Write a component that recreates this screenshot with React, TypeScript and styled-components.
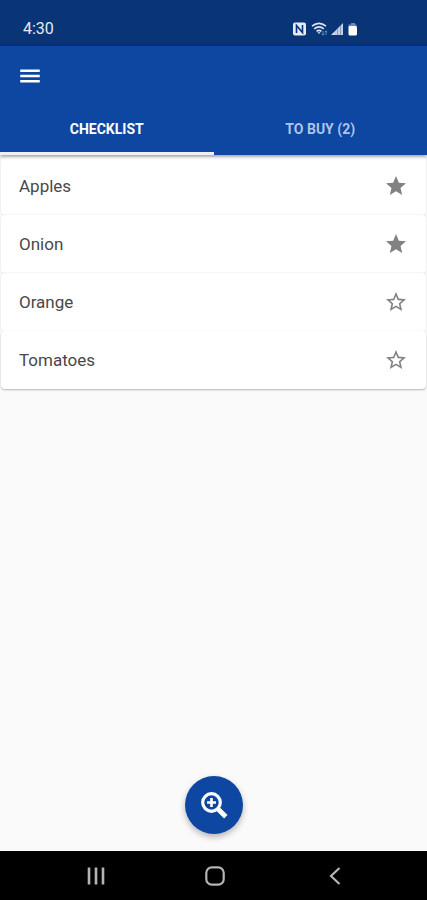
import React, { useState } from "react";
import styled, { createGlobalStyle } from "styled-components";

const GlobalStyle = createGlobalStyle`
  *, *::before, *::after { box-sizing: border-box; }
  body { margin: 0; background: #fafafa; font-family: Roboto, sans-serif; }
  button { font: inherit; border: 0; padding: 0; margin: 0; background: none; cursor: pointer; }
  svg { display: block; }
`;

const Screen = styled.div`
  min-height: 100vh;
  display: flex;
  flex-direction: column;
  background: #fafafa;
`;

const StatusBar = styled.div`
  height: 46px;
  padding: 12px 69px 0 23px;
  display: flex;
  align-items: center;
  justify-content: space-between;
  background: #093576;
  color: #e3e9f5;
  font-size: 16px;
  line-height: 34px;
`;

const StatusIcons = styled.div`
  display: flex;
  align-items: center;
  height: 34px;
`;

const Header = styled.header`
  position: relative;
  z-index: 1;
  background: #0d47a1;
  box-shadow: 0 1px 4px rgba(0, 0, 0, 0.45);
`;

const Toolbar = styled.div`
  height: 58px;
  padding: 2px 17px 0;
  display: flex;
  align-items: center;
`;

const MenuButton = styled.button`
  color: #fff;
`;

const Tabs = styled.div`
  display: grid;
  grid-template-columns: 1fr 1fr;
`;

const Tab = styled.button<{ $active: boolean }>`
  height: 51px;
  padding-top: 2px;
  border-bottom: 3px solid ${(p) => (p.$active ? "#eceff4" : "transparent")};
  color: ${(p) => (p.$active ? "#fff" : "#afc3ea")};
  font-size: 14px;
  font-weight: 700;
  line-height: 20px;
  text-transform: uppercase;
`;

const List = styled.ul`
  list-style: none;
  margin: 0;
  padding: 2px 1px 0;
`;

const Row = styled.li`
  min-height: 58px;
  padding: 0 18px;
  display: flex;
  align-items: center;
  justify-content: space-between;
  background: #fff;
  border-radius: 4px;
  box-shadow: 0 0 2px rgba(0, 0, 0, 0.14);
  color: #484848;
  font-size: 17px;
  line-height: 24px;

  &:last-child {
    box-shadow: 0 1px 2px rgba(0, 0, 0, 0.28);
  }
`;

const StarButton = styled.button`
  color: #828282;
`;

const Footer = styled.div`
  margin-top: auto;
  padding-bottom: 17px;
  display: flex;
  justify-content: center;
`;

const Fab = styled.button`
  width: 58px;
  height: 58px;
  border-radius: 50%;
  display: flex;
  align-items: center;
  justify-content: center;
  background: #0d47a1;
  color: #fff;
  box-shadow: 0 3px 6px rgba(0, 0, 0, 0.28);
`;

const NavBar = styled.nav`
  height: 49px;
  padding: 0 32px 0 36px;
  display: grid;
  grid-template-columns: 1fr 1fr 1fr;
  align-items: center;
  background: #000;
  color: #b4b4b4;
`;

const NavButton = styled.button`
  height: 48px;
  color: inherit;
  display: flex;
  align-items: center;
  justify-content: center;
`;

const STAR_FULL =
  "M12 17.27L18.18 21l-1.64-7.03L22 9.24l-7.19-.61L12 2 9.19 8.63 2 9.24l5.46 4.73L5.82 21z";
const STAR_OUTLINE =
  "M22 9.24l-7.19-.62L12 2 9.19 8.63 2 9.24l5.46 4.73L5.82 21 12 17.27 18.18 21l-1.63-7.03L22 9.24zM12 15.4l-3.76 2.27 1-4.28-3.32-2.88 4.38-.38L12 6.1l1.71 4.04 4.38.38-3.32 2.88 1 4.28L12 15.4z";

const START = [
  { name: "Apples", starred: true },
  { name: "Onion", starred: true },
  { name: "Orange", starred: false },
  { name: "Tomatoes", starred: false },
];

function SystemIcons() {
  return (
    <svg width="66" height="16" viewBox="0 0 66 16" fill="none" aria-hidden="true">
      <rect x="1" y="1.5" width="13" height="13" rx="2" fill="#e6ebf5" />
      <path d="M4.5 12V4.5L10.5 11.5V4" stroke="#093576" strokeWidth="1.6" />
      <path d="M20 5.2q7-5.6 14 0M22.2 7.9q4.8-4 9.6 0M24.6 10.3q2.4-2 4.8 0" stroke="#dfe6f3" strokeWidth="1.6" />
      <path d="M25.4 11.2h3.2L27 13z" fill="#dfe6f3" />
      <path d="M31 10v4M29.8 12.8l1.2 1.4 1.2-1.4M34 14v-4M32.8 11.2L34 9.8l1.2 1.4" stroke="#7f97c0" strokeWidth="0.8" />
      <path d="M39 14l3-3v3z" fill="#d6deed" />
      <path d="M42 14v-3l3-3v6zM45.3 14V7.7L48 5v9zM48.3 14V4.7L51 2v12z" fill="#c3cfe4" />
      <path d="M59 2h4v1.6h1.5v3h-8v-3H59z" fill="#7189b3" />
      <rect x="56.5" y="5" width="8.5" height="9.5" rx="1.5" fill="#fff" />
    </svg>
  );
}

export default function App() {
  const [tab, setTab] = useState(0);
  const [items, setItems] = useState(START);
  const count = items.filter((i) => i.starred).length;
  const shown = tab === 0 ? items : items.filter((i) => i.starred);

  const toggle = (name: string) =>
    setItems(items.map((i) => (i.name === name ? { ...i, starred: !i.starred } : i)));

  return (
    <>
      <GlobalStyle />
      <Screen>
        <StatusBar>
          <span>4:30</span>
          <StatusIcons>
            <SystemIcons />
          </StatusIcons>
        </StatusBar>
        <Header>
          <Toolbar>
            <MenuButton aria-label="Open menu">
              <svg width="26" height="26" viewBox="0 0 24 24" fill="currentColor">
                <path d="M3 18h18v-2.2H3zM3 13.1h18v-2.2H3zM3 6v2.2h18V6z" />
              </svg>
            </MenuButton>
          </Toolbar>
          <Tabs role="tablist">
            <Tab role="tab" aria-selected={tab === 0} $active={tab === 0} onClick={() => setTab(0)}>
              Checklist
            </Tab>
            <Tab role="tab" aria-selected={tab === 1} $active={tab === 1} onClick={() => setTab(1)}>
              To buy ({count})
            </Tab>
          </Tabs>
        </Header>
        <List>
          {shown.map((item) => (
            <Row key={item.name}>
              <span>{item.name}</span>
              <StarButton
                aria-label={`Star ${item.name}`}
                aria-pressed={item.starred}
                onClick={() => toggle(item.name)}
              >
                <svg width="24" height="24" viewBox="0 0 24 24" fill="currentColor">
                  <path d={item.starred ? STAR_FULL : STAR_OUTLINE} />
                </svg>
              </StarButton>
            </Row>
          ))}
        </List>
        <Footer>
          <Fab aria-label="Search and add">
            <svg width="28" height="28" viewBox="0 0 28 28" fill="none" stroke="currentColor">
              <circle cx="11.5" cy="11.5" r="8.8" strokeWidth="3.2" />
              <path d="M11.5 7v9M7 11.5h9" strokeWidth="2.6" />
              <path d="M18 18l7.8 7.8" strokeWidth="4.8" />
            </svg>
          </Fab>
        </Footer>
        <NavBar aria-label="System">
          <NavButton aria-label="Recent apps">
            <svg width="18" height="18" viewBox="0 0 18 18" stroke="currentColor" strokeWidth="2.6">
              <path d="M2 0.5v17M9 0.5v17M16 0.5v17" />
            </svg>
          </NavButton>
          <NavButton aria-label="Home">
            <svg width="20" height="20" viewBox="0 0 20 20" fill="none" stroke="currentColor" strokeWidth="2.2">
              <rect x="1.3" y="1.3" width="17.4" height="17.4" rx="5.5" />
            </svg>
          </NavButton>
          <NavButton aria-label="Back">
            <svg width="12" height="18" viewBox="0 0 12 18" fill="none" stroke="currentColor" strokeWidth="2.2">
              <path d="M10.5 1L2 9l8.5 8" />
            </svg>
          </NavButton>
        </NavBar>
      </Screen>
    </>
  );
}
